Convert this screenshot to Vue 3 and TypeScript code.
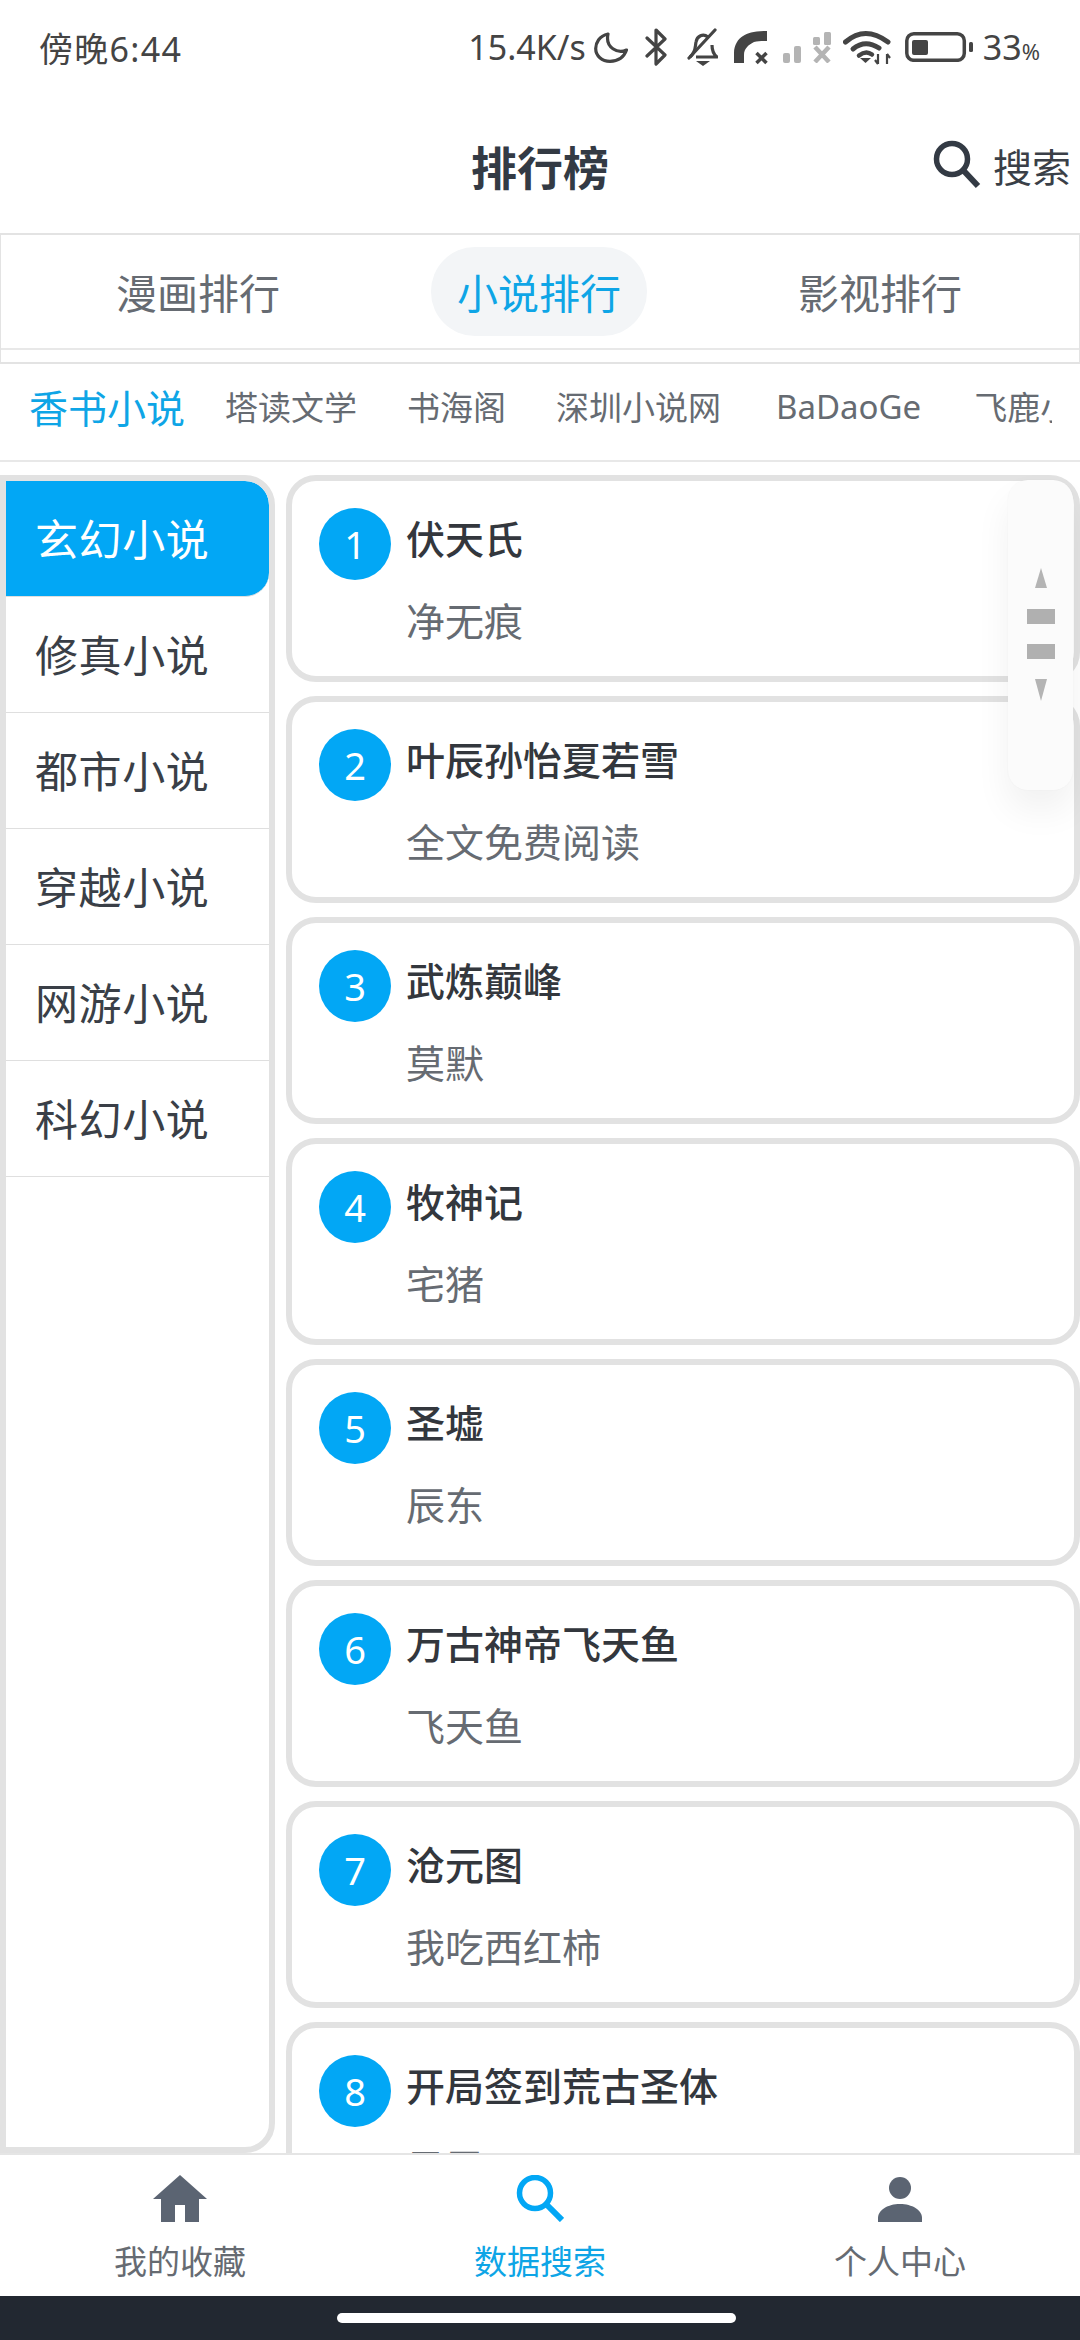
<script setup lang="ts">
const sources: string[] = ['塔读文学', '书海阁', '深圳小说网', 'BaDaoGe', '飞鹿小说']
const categories: string[] = ['玄幻小说', '修真小说', '都市小说', '穿越小说', '网游小说', '科幻小说']
const books: { title: string; author: string }[] = [
  { title: '伏天氏', author: '净无痕' },
  { title: '叶辰孙怡夏若雪', author: '全文免费阅读' },
  { title: '武炼巅峰', author: '莫默' },
  { title: '牧神记', author: '宅猪' },
  { title: '圣墟', author: '辰东' },
  { title: '万古神帝飞天鱼', author: '飞天鱼' },
  { title: '沧元图', author: '我吃西红柿' },
  { title: '开局签到荒古圣体', author: '君零' },
]
</script>

<template>
  <div class="page">
    <div class="status">
      <span class="clock">傍晚6:44</span>
      <div class="status-right">
        <span class="speed">15.4K/s</span>
        <svg class="moon" width="34" height="31" viewBox="0 0 34 31"><path d="M14 2C5 4 1.700 11 1.700 16.500 1.700 24 8 29.300 16 29.300 24 29.300 30 25 32.500 18 24 22 11 16 14 2Z" fill="none" stroke="#444" stroke-width="3.200" stroke-linejoin="round"/></svg>
        <svg class="bt" width="24" height="38" viewBox="0 0 24 38"><path d="M3 10 21 27 12 36V2L21 11 3 28" fill="none" stroke="#444" stroke-width="3.200" stroke-linejoin="round" stroke-linecap="round"/></svg>
        <svg class="bell" width="31" height="38" viewBox="0 0 31 38"><path d="M3 29C9 24 8 19 9 14 10 8 16 5 21 9M25 17C25 22 26 26 30 29H9" fill="none" stroke="#444" stroke-width="3.200" stroke-linejoin="round"/><path d="M2 30 28 2" stroke="#444" stroke-width="3.200" stroke-linecap="round"/><path d="M9 33H23L16 38Z" fill="#444"/></svg>
        <svg class="phone" width="34" height="36" viewBox="0 0 34 36"><path d="M0 34V24C0 16 4 10 9 7 14 4 20 2 33 2V12C28 12 24 12 20 13 14 16 10 20 10 26L10 34Z" fill="#444"/><path d="M22.500 24 32.500 34M32.500 24 22.500 34" stroke="#444" stroke-width="3.500"/></svg>
        <svg class="signal" width="48" height="31" viewBox="0 0 48 31"><g fill="#b4b4b4"><rect x="0" y="21" width="7" height="10" rx="2"/><rect x="11" y="14" width="7" height="17" rx="2"/><rect x="30" y="5" width="7" height="8" rx="1.500"/><rect x="41" y="0" width="7" height="13" rx="1.500"/></g><path d="M32 15 46 30M46 15 32 30" stroke="#b4b4b4" stroke-width="4.500"/></svg>
        <svg class="wifi" width="48" height="35" viewBox="0 0 48 35"><g fill="none" stroke="#444" stroke-linecap="round"><path d="M2.500 12Q22-5 45 12" stroke-width="5"/><path d="M10 19Q22 9 36 18" stroke-width="5"/><path d="M16 25.500Q23 20 29 24.500" stroke-width="4.500"/></g><path d="M17 28 22.500 33 28 28Z" fill="#444"/><path d="M35 24V34M32 30 35 34M44 34V24M44 24 47 28" stroke="#444" stroke-width="2.200" fill="none"/></svg>
        <svg class="battery" width="68" height="30" viewBox="0 0 68 30"><rect x="1.800" y="1.800" width="57.500" height="26.500" rx="7" fill="none" stroke="#444" stroke-width="3.500"/><rect x="7" y="8" width="16" height="15" rx="2" fill="#444"/><rect x="64" y="10" width="4" height="10" rx="1.500" fill="#444"/></svg>
        <span class="level">33<small>%</small></span>
      </div>
    </div>

    <header class="header">
      <span></span>
      <h1 class="title">排行榜</h1>
      <div class="search">
        <svg width="48" height="49" viewBox="0 0 48 49"><circle cx="19" cy="19" r="15.500" fill="none" stroke="#333a44" stroke-width="5.500"/><path d="M30 30 45 46" stroke="#333a44" stroke-width="6"/></svg>
        <span>搜索</span>
      </div>
    </header>

    <section class="tabs">
      <div class="tab-row">
        <span class="tab">漫画排行</span>
        <span class="tab on">小说排行</span>
        <span class="tab">影视排行</span>
      </div>
    </section>

    <nav class="sources">
      <span class="source on">香书小说</span>
      <span v-for="s in sources" :key="s" class="source">{{ s }}</span>
    </nav>

    <main class="main">
      <aside class="side">
        <div v-for="(c, i) in categories" :key="c" class="cat" :class="{ on: i === 0 }">{{ c }}</div>
      </aside>
      <div class="list">
        <article v-for="(b, i) in books" :key="b.title" class="card">
          <div class="rank">{{ i + 1 }}</div>
          <div class="info">
            <div class="book">{{ b.title }}</div>
            <div class="author">{{ b.author }}</div>
          </div>
        </article>
      </div>
    </main>

    <div class="scroller">
      <svg width="28" height="134" viewBox="0 0 28 134"><path d="M14 0 20 20H8Z" fill="#b4b4b4"/><rect y="41" width="28" height="15" fill="#b0b0b0"/><rect y="76" width="28" height="15" fill="#b0b0b0"/><path d="M8 111H20L14 133Z" fill="#b4b4b4"/></svg>
    </div>

    <footer class="nav">
      <div class="nav-item">
        <svg width="54" height="47" viewBox="0 0 54 47"><path d="M27 0 54 24H46V47H32V30H22V47H8V24H0Z" fill="#5b6472"/></svg>
        <span>我的收藏</span>
      </div>
      <div class="nav-item on">
        <svg width="48" height="47" viewBox="0 0 48 47"><circle cx="19" cy="18" r="15.500" fill="none" stroke="#02a7f5" stroke-width="5.500"/><path d="M30 29 46 45" stroke="#02a7f5" stroke-width="6"/></svg>
        <span>数据搜索</span>
      </div>
      <div class="nav-item">
        <svg width="44" height="47" viewBox="0 0 44 47"><circle cx="22" cy="13" r="11" fill="#5b6472"/><path d="M0 47V43C0 35 10 29 22 29S44 35 44 43V47Z" fill="#5b6472"/></svg>
        <span>个人中心</span>
      </div>
    </footer>

    <div class="gesture"><i></i></div>
  </div>
</template>

<style>
body { margin: 0; background: #fff; }
</style>

<style scoped>
.page {
  position: relative;
  width: 1080px;
  height: 2340px;
  overflow: hidden;
  display: flex;
  flex-direction: column;
  background: #fff;
  font-family: "Noto Sans", "Noto Sans CJK SC", sans-serif;
  color: #3a3f47;
}
.status {
  height: 96px;
  box-sizing: border-box;
  padding: 0 40px 2px 39px;
  flex: none;
  display: flex;
  align-items: center;
  justify-content: space-between;
  color: #444;
  font-size: 34px;
}
.status-right { display: flex; align-items: center; }
.clock { letter-spacing: 1.300px; }
.moon { margin-left: 8px; }
.bt { margin-left: 16px; }
.bell { margin-left: 19px; }
.phone { margin-left: 16px; }
.signal { margin-left: 15px; }
.wifi { margin-left: 12px; }
.battery { margin-left: 14px; }
.level { margin-left: 10px; }
.level small { font-size: 22px; }
.header {
  height: 137px;
  flex: none;
  display: grid;
  grid-template-columns: 1fr auto 1fr;
  align-items: center;
}
.title {
  margin: 0;
  font-size: 46px;
  font-weight: 700;
  color: #333a44;
}
.search {
  justify-self: end;
  display: flex;
  align-items: center;
  gap: 12px;
  padding-right: 9px;
  font-size: 39px;
  color: #3a3f47;
}
.tabs {
  height: 131px;
  flex: none;
  box-sizing: border-box;
  border: 1px solid #e3e3e3;
  border-top-width: 2px;
  border-bottom-width: 2px;
}
.tab-row {
  height: 115px;
  box-sizing: border-box;
  border-bottom: 2px solid #e8e8e8;
  padding-left: 89px;
  display: flex;
  align-items: center;
  gap: 125px;
}
.tab {
  width: 216px;
  height: 89px;
  box-sizing: border-box;
  padding-bottom: 2px;
  display: flex;
  align-items: center;
  justify-content: center;
  border-radius: 44px;
  font-size: 41px;
  color: #666b72;
}
.tab.on { background: #f3f5f7; color: #0ea5e6; }
.sources {
  height: 96px;
  flex: none;
  box-sizing: border-box;
  margin-right: 28px;
  padding: 0 0 12px 29px;
  display: flex;
  align-items: center;
  gap: 50px;
  overflow: hidden;
  white-space: nowrap;
  font-size: 33px;
  color: #666b72;
}
.source.on { font-size: 39px; color: #0ea5e6; margin-right: -10px; }
.source:nth-child(5) { margin-left: 5px; }
.source:last-child { margin-left: 3px; }
.main {
  flex: 1;
  min-height: 0;
  display: flex;
  gap: 11px;
  padding-top: 13px;
  border-top: 2px solid #e8e8e8;
  overflow: hidden;
}
.side {
  width: 275px;
  flex: none;
  box-sizing: border-box;
  border: 6px solid #e2e2e2;
  border-radius: 0 30px 30px 0;
  overflow: hidden;
}
.cat {
  height: 116px;
  box-sizing: border-box;
  padding: 0 0 2px 29px;
  display: flex;
  align-items: center;
  border-bottom: 1px solid #dfdfdf;
  font-size: 43px;
  letter-spacing: .6px;
  color: #3a3f47;
}
.cat.on {
  color: #fff;
  background: #02a7f5;
  border-radius: 0 24px 24px 0;
}
.list {
  flex: 1;
  display: flex;
  flex-direction: column;
  gap: 14px;
}
.card {
  height: 207px;
  flex: none;
  box-sizing: border-box;
  border: 6px solid #e2e2e2;
  border-radius: 30px;
  padding: 27px;
  display: flex;
  gap: 15px;
}
.rank {
  width: 72px;
  height: 72px;
  flex: none;
  border-radius: 50%;
  background: #02a7f5;
  color: #fff;
  font-size: 38px;
  font-weight: 400;
  display: flex;
  align-items: center;
  justify-content: center;
}
.info { display: flex; flex-direction: column; padding-top: 3px; }
.book {
  font-size: 39px;
  line-height: 56px;
  font-weight: 500;
  color: #33373d;
}
.author {
  margin-top: 26px;
  font-size: 39px;
  line-height: 56px;
  color: #666b72;
}
.scroller {
  position: absolute;
  left: 1008px;
  top: 480px;
  width: 65px;
  height: 310px;
  box-sizing: border-box;
  border-radius: 20px;
  background: #fbfbfb;
  box-shadow: 0 20px 36px rgba(0, 0, 0, .06), 0 0 2px rgba(0, 0, 0, .06);
  display: flex;
  align-items: center;
  justify-content: center;
  filter: blur(.7px);
}
.nav {
  height: 143px;
  flex: none;
  box-sizing: border-box;
  position: relative;
  z-index: 1;
  background: #fff;
  border-top: 2px solid #e5e5e5;
  display: grid;
  grid-template-columns: repeat(3, 1fr);
}
.nav-item {
  display: flex;
  flex-direction: column;
  align-items: center;
  padding-top: 20px;
  gap: 17px;
  font-size: 33px;
  line-height: 46px;
  color: #666b72;
}
.nav-item.on { color: #0ea5e6; }
.gesture {
  height: 44px;
  flex: none;
  background: #222831;
  display: flex;
  align-items: center;
  justify-content: center;
  padding-right: 8px;
}
.gesture i {
  display: block;
  width: 399px;
  height: 10px;
  border-radius: 5px;
  background: #fff;
}
</style>
